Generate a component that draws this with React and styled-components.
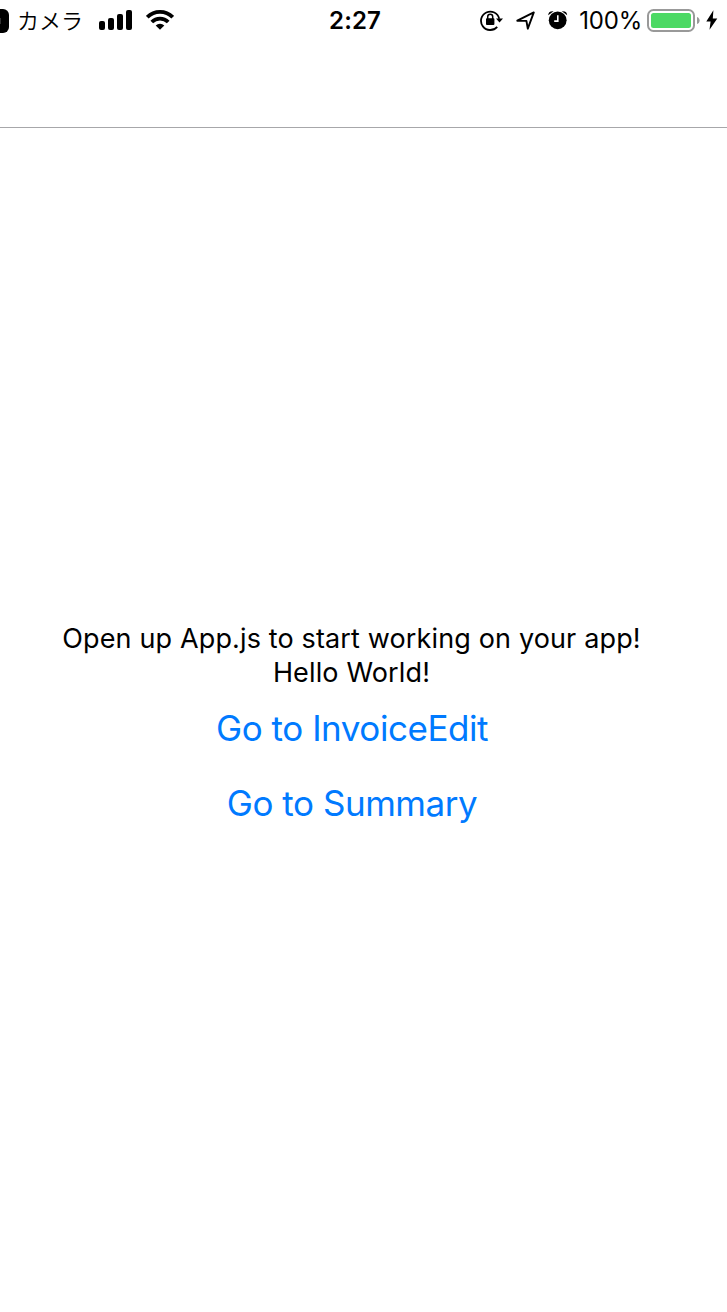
import React from "react";
import styled, { createGlobalStyle } from "styled-components";

const GlobalStyle = createGlobalStyle`
  * { box-sizing: border-box; }
  body {
    margin: 0;
    background: #fff;
    color: #000;
    font-family: Inter, "Liberation Sans", "Noto Sans CJK JP", sans-serif;
  }
`;

const Viewport = styled.div`
  width: 727px;
  height: 1312px;
  overflow: hidden;
  display: flex;
  justify-content: flex-end;
`;

const Screen = styled.div`
  flex: none;
  width: 750px;
  height: 1334px;
  display: flex;
  flex-direction: column;
`;

const StatusBar = styled.header`
  height: 40px;
  flex: none;
  display: grid;
  grid-template: 40px / 1fr auto 1fr;
  align-items: center;
  padding: 0 9px 0 14px;
`;

const StatusGroup = styled.div`
  display: flex;
  align-items: center;
  height: 40px;
  justify-content: ${(p) => (p.$end ? "flex-end" : "flex-start")};
`;

const BackBadge = styled.span`
  width: 18px;
  height: 24px;
  margin: 2px 8px 0 0;
  border-radius: 6px;
  background: linear-gradient(#333, #333) 9px 9px / 1px 6px no-repeat #000;
`;

const BackLabel = styled.span`
  width: 66px;
  height: 40px;
  margin-right: 16px;
  white-space: nowrap;
  font: 350 22px/39px "Noto Sans CJK JP", sans-serif;
`;

const Clock = styled.time`
  height: 40px;
  padding-left: 1px;
  font-size: 24px;
  font-weight: 600;
  line-height: 42px;
  letter-spacing: 0.1px;
`;

const Percent = styled.span`
  height: 40px;
  margin-right: 5px;
  font-size: 24px;
  line-height: 42px;
  letter-spacing: -0.2px;
  white-space: nowrap;
`;

const Glyph = styled.svg`
  display: block;
  flex: none;
  margin-right: ${(p) => p.$gap || 0}px;
`;

const NavBar = styled.nav`
  flex: none;
  height: 88px;
  border-bottom: 1px solid #a7a7aa;
`;

const Content = styled.main`
  flex: 1;
  display: flex;
  flex-direction: column;
  align-items: center;
  justify-content: center;
`;

const Message = styled.p`
  margin: 0;
  padding-right: 1px;
  font-size: 27px;
  line-height: 34px;
  letter-spacing: 0.14px;
  white-space: nowrap;
`;

const LinkButton = styled.button`
  height: 75px;
  padding: 2px 0 0;
  border: 0;
  background: none;
  color: #007aff;
  font: 400 35px/43px Inter, "Liberation Sans", sans-serif;
  letter-spacing: -0.45px;
  white-space: nowrap;
`;

const Signal = () => (
  <Glyph width="34" height="40" $gap={13}>
    <rect x="0" y="21" width="6" height="9" rx="2" />
    <rect x="9" y="18" width="6" height="12" rx="2" />
    <rect x="18" y="14" width="6" height="16" rx="2" />
    <rect x="27" y="10" width="6" height="20" rx="2" />
  </Glyph>
);

const Wifi = () => (
  <Glyph width="28" height="40" fill="none" stroke="#000" strokeWidth="3.8">
    <path d="M1.3 17.2a18 18 0 0 1 25.4 0" />
    <path d="M5.8 22a11.6 11.6 0 0 1 16.4 0" />
    <path d="M9.7 25.6a6.1 6.1 0 0 1 8.6 0L14 29.8Z" fill="#000" stroke="none" />
  </Glyph>
);

const RotationLock = () => (
  <Glyph width="24" height="40" $gap={12}>
    <path d="M17.2 26.8A9.2 9.2 0 1 1 19.2 18.8" fill="none" stroke="#000" strokeWidth="1.8" />
    <path d="M16 18.6h7L19.5 22.6Z" />
    <rect x="6" y="18.2" width="8.4" height="6.8" rx="0.9" />
    <path d="M7.7 19v-2.2a2.5 2.5 0 0 1 5 0V19" fill="none" stroke="#000" strokeWidth="1.5" />
  </Glyph>
);

const Location = () => (
  <Glyph width="20" height="40" $gap={12}>
    <path d="M1.3 20.7 17.8 12.4 11.8 28.7 10.4 20.9Z" fill="none" stroke="#000" strokeWidth="1.9" strokeLinejoin="round" />
  </Glyph>
);

const Alarm = () => (
  <Glyph width="20" height="40" $gap={11}>
    <circle cx="9.7" cy="20.3" r="8.9" />
    <path d="M.2 15.2C.2 12.5 2 10.8 5.6 11.2ZM13.8 11.2c3.6-.4 5.4 1.3 5.4 4Z" />
    <path d="M9.8 15.2v5.9H6.2" fill="none" stroke="#fff" strokeWidth="1.6" />
  </Glyph>
);

const Battery = () => (
  <Glyph width="53" height="40" $gap={6}>
    <rect x="1" y="10" width="46" height="21" rx="5.5" fill="#fff" stroke="#999" strokeWidth="2" />
    <rect x="4" y="13" width="40" height="15" rx="2.5" fill="#4cd964" />
    <path d="M50 17c3.5 1 3.5 6 0 7Z" fill="#999" />
  </Glyph>
);

const Bolt = () => (
  <Glyph width="12" height="40">
    <path d="M7.4 10.3.3 21.6h4.3L3.5 29.8 11.3 18.4H6.8Z" />
  </Glyph>
);

export default function App() {
  return (
    <Viewport>
      <GlobalStyle />
      <Screen>
        <StatusBar>
          <StatusGroup>
            <BackBadge />
            <BackLabel>カメラ</BackLabel>
            <Signal />
            <Wifi />
          </StatusGroup>
          <Clock>2:27</Clock>
          <StatusGroup $end>
            <RotationLock />
            <Location />
            <Alarm />
            <Percent>100%</Percent>
            <Battery />
            <Bolt />
          </StatusGroup>
        </StatusBar>
        <NavBar />
        <Content>
          <Message>Open up App.js to start working on your app!</Message>
          <Message>Hello World!</Message>
          <LinkButton>Go to InvoiceEdit</LinkButton>
          <LinkButton>Go to Summary</LinkButton>
        </Content>
      </Screen>
    </Viewport>
  );
}
